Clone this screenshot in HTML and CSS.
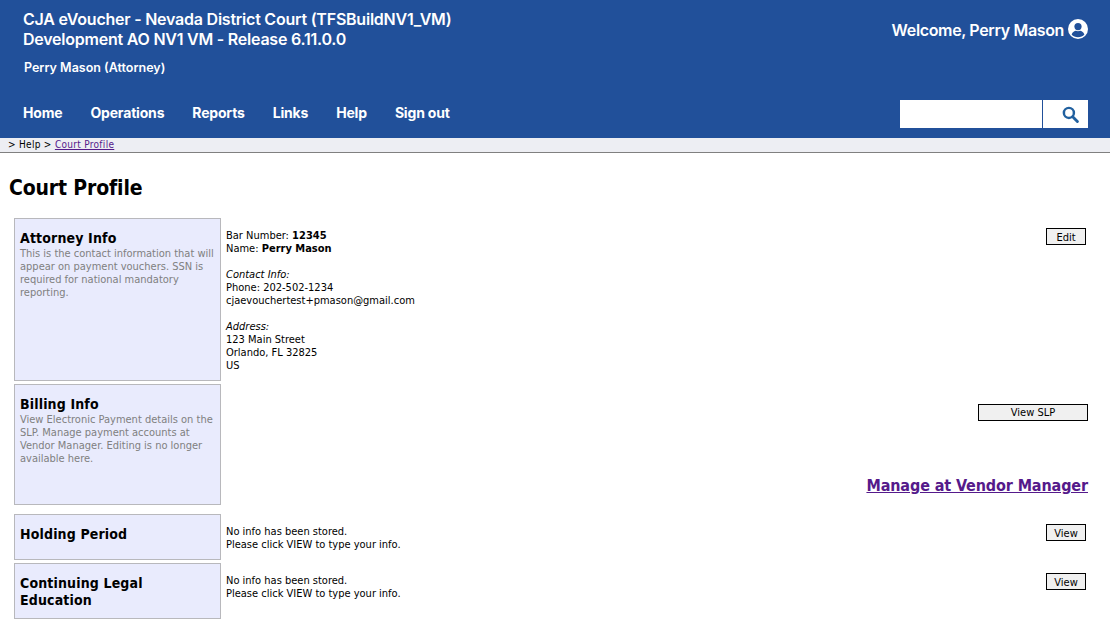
FILE: index.html
```html
<!DOCTYPE html>
<html lang="en">
<head>
<meta charset="utf-8">
<title>Court Profile</title>
<link rel="stylesheet" href="styles.css">
</head>
<body>
<header class="site-header">
  <div class="header-top">
    <div class="titles">
      <div class="app-title">CJA eVoucher - Nevada District Court (TFSBuildNV1_VM)<br>Development AO NV1 VM - Release 6.11.0.0</div>
      <div class="user-role">Perry Mason (Attorney)</div>
    </div>
    <div class="welcome">
      <span>Welcome, Perry Mason</span>
      <svg class="user-icon" viewBox="0 0 20 20" width="20" height="20"><circle cx="10" cy="10" r="10" fill="#fff"/><circle cx="10" cy="7.6" r="3.6" fill="#21509a"/><path d="M3.6 15.6c1-2.8 3-3.9 4.3-3.9.7.3 1.4.5 2.1.5s1.400-.2 2.100-.5c1.300 0 3.300 1.100 4.300 3.900C14.900 17.300 12.600 18.300 10 18.300s-4.900-1-6.400-2.700z" fill="#21509a"/></svg>
    </div>
  </div>
  <nav class="nav-row">
    <ul class="nav-links">
      <li><a href="#">Home</a></li>
      <li><a href="#">Operations</a></li>
      <li><a href="#">Reports</a></li>
      <li><a href="#">Links</a></li>
      <li><a href="#">Help</a></li>
      <li><a href="#">Sign out</a></li>
    </ul>
    <form class="search">
      <input class="search-input" type="text" aria-label="Search">
      <button class="search-btn" type="button" aria-label="Search">
        <svg viewBox="0 0 18 18" width="17" height="17"><circle cx="7.300" cy="7.300" r="5.300" fill="none" stroke="#21609f" stroke-width="2.600"/><path d="M11.300 11.300l5 5" stroke="#21609f" stroke-width="3" stroke-linecap="round"/></svg>
      </button>
    </form>
  </nav>
</header>
<div class="breadcrumb">&gt; Help &gt; <a href="#" class="crumb-link">Court Profile</a></div>
<main class="content">
  <h1 class="page-title">Court Profile</h1>
  <section class="row row-attorney">
    <div class="label-box">
      <h2>Attorney Info</h2>
      <p>This is the contact information that will appear on payment vouchers. SSN is required for national mandatory reporting.</p>
    </div>
    <div class="detail">
      Bar Number: <b>12345</b><br>
      Name: <b>Perry Mason</b><br><br>
      <i>Contact Info:</i><br>
      Phone: 202-502-1234<br>
      cjaevouchertest+pmason@gmail.com<br><br>
      <i>Address:</i><br>
      123 Main Street<br>
      Orlando, FL 32825<br>
      US
    </div>
    <div class="actions actions-narrow"><button class="btn" type="button">Edit</button></div>
  </section>
  <section class="row row-billing">
    <div class="label-box">
      <h2>Billing Info</h2>
      <p>View Electronic Payment details on the SLP. Manage payment accounts at Vendor Manager. Editing is no longer available here.</p>
    </div>
    <div class="detail"></div>
    <div class="actions actions-billing">
      <button class="btn btn-wide" type="button">View SLP</button>
      <a href="#" class="vendor-link">Manage at Vendor Manager</a>
    </div>
  </section>
  <section class="row row-holding">
    <div class="label-box"><h2>Holding Period</h2></div>
    <div class="detail">No info has been stored.<br>Please click VIEW to type your info.</div>
    <div class="actions actions-narrow"><button class="btn" type="button">View</button></div>
  </section>
  <section class="row row-cle">
    <div class="label-box"><h2>Continuing Legal Education</h2></div>
    <div class="detail">No info has been stored.<br>Please click VIEW to type your info.</div>
    <div class="actions actions-narrow"><button class="btn" type="button">View</button></div>
  </section>
</main>
</body>
</html>
```
FILE: styles.css
```css
* { box-sizing: border-box; }
html, body { margin: 0; padding: 0; background: #fff; }
body { font-family: "DejaVu Sans Condensed", "DejaVu Sans", Verdana, sans-serif; font-stretch: condensed; font-size: 12px; color: #000; overflow: hidden; }

.site-header { background: #21509a; height: 138px; color: #fff; font-family: Inter, "Liberation Sans", sans-serif; font-stretch: normal; padding: 0 22px 0 23px; display: flex; flex-direction: column; }
.header-top { display: flex; justify-content: space-between; height: 100px; }
.app-title { font-size: 16px; font-weight: 600; line-height: 20px; padding-top: 9px; letter-spacing: -0.23px; }
.user-role { font-size: 12.500px; font-weight: 600; margin: 11px 0 0 1px; line-height: 16px; }
.welcome { display: flex; align-items: center; gap: 4px; height: 20px; margin-top: 20px; font-size: 16px; font-weight: 600; letter-spacing: -0.35px; }
.user-icon { display: block; margin-bottom: 2px; }

.nav-row { display: flex; justify-content: space-between; align-items: flex-start; }
.nav-links { list-style: none; margin: 0; padding: 0; display: flex; gap: 28px; }
.nav-links a { color: #fff; text-decoration: none; font-size: 14px; font-weight: 700; line-height: 26px; letter-spacing: -0.18px; }
.search { display: flex; margin: 0; }
.search-input { width: 142px; height: 28px; border: 0; background: #fff; padding: 0; margin: 0 1px 0 0; }
.search-btn { width: 45px; height: 28px; border: 0; background: #fff; padding: 0 0 0 10px; display: flex; align-items: center; justify-content: center; }

.breadcrumb { height: 15px; background: #edeef3; border-bottom: 1px solid #808080; font-size: 10px; line-height: 13px; padding-left: 8px; letter-spacing: 0.3px; }
.crumb-link { color: #551a8b; }

.content { padding: 0 22px 0 14px; }
.page-title { font-size: 21px; font-weight: 700; line-height: 26px; margin: 22px 0 0 -5px; letter-spacing: -0.15px; }

.row { display: flex; }
.row-attorney { height: 163px; margin-top: 17px; }
.row-billing { height: 121px; margin-top: 3px; }
.row-holding { height: 46px; margin-top: 9px; }
.row-cle { height: 56px; margin-top: 3px; }

.label-box { width: 207px; flex: none; background: #e9ebfd; border: 1px solid #b8b8bc; padding: 11px 5px 0; }
.label-box h2 { margin: 0; font-size: 14px; line-height: 17px; font-weight: 700; letter-spacing: 0.15px; }
.label-box p { margin: 0; font-size: 11px; line-height: 13px; color: #808080; }

.detail { padding: 11px 0 0 5px; font-size: 11px; line-height: 13px; flex: 1; }

.actions { display: flex; flex-direction: column; align-items: flex-end; }
.actions-narrow { padding: 10px 2px 0 0; }
.actions-narrow .btn { padding-top: 1px; }
.actions-billing { padding-top: 20px; }
.btn { width: 40px; height: 17px; padding: 0; background: #f0f0f0; border: 1px solid #000; border-radius: 0; font-family: inherit; font-size: 11px; line-height: 15px; color: #000; }
.btn-wide { width: 110px; }
.vendor-link { margin-top: 55px; font-size: 16px; font-weight: 700; line-height: 20px; color: #551a8b; white-space: nowrap; letter-spacing: -0.12px; }
```
